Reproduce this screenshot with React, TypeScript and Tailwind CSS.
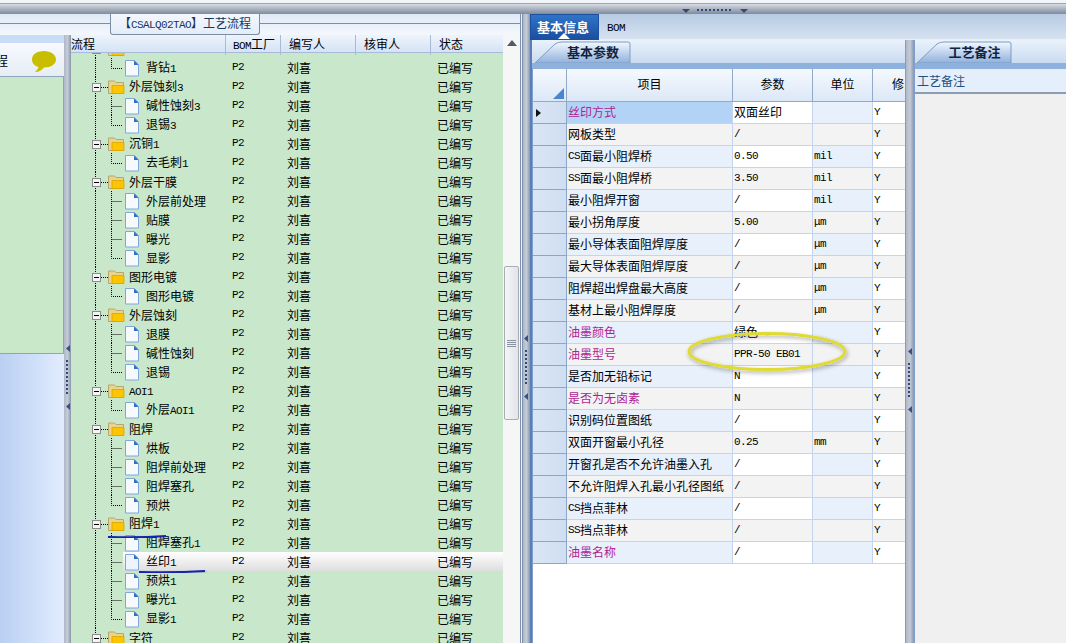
import React from "react";

const FONT = '"Noto Sans CJK SC", "Liberation Sans", sans-serif';

function T({ s }: { s: string }) {
  const parts = s.split(/([\x00-\x7fμ]+)/).filter(Boolean);
  return (
    <>
      {parts.map((p, i) =>
        /^[\x00-\x7fμ]+$/.test(p) ? (
          <span key={i} className="text-[11px] tracking-[-0.6px] whitespace-pre" style={{ fontFamily: '"Liberation Mono", monospace' }}>{p}</span>
        ) : (
          <span key={i}>{p}</span>
        )
      )}
    </>
  );
}

type Node = { l: string; k: "f" | "c" | "e"; blank?: boolean };

const tree: Node[] = [
  { l: "", k: "f", blank: true },
  { l: "背钻1", k: "e" },
  { l: "外层蚀刻3", k: "f" },
  { l: "碱性蚀刻3", k: "c" },
  { l: "退锡3", k: "e" },
  { l: "沉铜1", k: "f" },
  { l: "去毛刺1", k: "e" },
  { l: "外层干膜", k: "f" },
  { l: "外层前处理", k: "c" },
  { l: "贴膜", k: "c" },
  { l: "曝光", k: "c" },
  { l: "显影", k: "e" },
  { l: "图形电镀", k: "f" },
  { l: "图形电镀", k: "e" },
  { l: "外层蚀刻", k: "f" },
  { l: "退膜", k: "c" },
  { l: "碱性蚀刻", k: "c" },
  { l: "退锡", k: "e" },
  { l: "AOI1", k: "f" },
  { l: "外层AOI1", k: "e" },
  { l: "阻焊", k: "f" },
  { l: "烘板", k: "c" },
  { l: "阻焊前处理", k: "c" },
  { l: "阻焊塞孔", k: "c" },
  { l: "预烘", k: "e" },
  { l: "阻焊1", k: "f" },
  { l: "阻焊塞孔1", k: "c" },
  { l: "丝印1", k: "c" },
  { l: "预烘1", k: "c" },
  { l: "曝光1", k: "c" },
  { l: "显影1", k: "e" },
  { l: "字符", k: "f" },
];

function TreeGlyph({ n, sel }: { n: Node; sel: boolean }) {
  const folder = n.k === "f";
  return (
    <svg width={folder ? 54 : 69} height={19} className="shrink-0 block">
      <path d="M24.5 0V19" stroke="#000" strokeDasharray="1 1" />
      {folder ? (
        <>
          <path d="M30 10.5H37" stroke="#000" strokeDasharray="1 1" />
          <rect x="21.5" y="6.5" width="8" height="8" fill="#f4f4f4" stroke="#8c8c8c" />
          <path d="M23 10.5H28" stroke="#000" />
          <path d="M37.500 4h6l1.500 1.500h7.500v11H37.500z" fill="#e9d48c" stroke="#b9a66a" />
          <path d="M41 8.500h12v8H41z" fill="#fcc500" stroke="#d9a400" strokeWidth="0.8" />
        </>
      ) : (
        <>
          <path d={n.k === "e" ? "M40.5 0V10.5H51" : "M40.5 0V19M40.5 10.5H51"} stroke="#000" fill="none" strokeDasharray="1 1" />
          <path d="M54.5 2.5h9l4 4v11.5h-13z" fill={sel ? "#eef4fd" : "#f6faff"} stroke="#7fa8d8" />
          <path d="M63 2.5l4.5 4.5h-4.5z" fill="#2f6fc0" />
        </>
      )}
    </svg>
  );
}

function TreeRow({ n }: { n: Node }) {
  const sel = n.l === "丝印1";
  const cell = "h-[19px] flex items-center text-[12px] leading-[19px] text-black";
  return (
    <div className="h-[19px] relative grid grid-cols-[155px_55px_75px_75px_72px] w-[432px]">
      {sel && <div className="absolute left-[52px] right-0 top-0 h-[19px] bg-gradient-to-b from-white to-[#dedede]" />}
      <div className={`${cell} relative`}>
        <TreeGlyph n={n} sel={sel} />
        <span className={n.k === "f" ? "ml-[4px]" : "ml-[6px]"}><T s={n.l} /></span>
      </div>
      {n.blank ? null : (
        <>
          <div className={`${cell} relative pl-[6px]`}><T s="P2" /></div>
          <div className={`${cell} relative pl-[6px]`}>刘喜</div>
          <div className={`${cell} relative`}></div>
          <div className={`${cell} relative pl-[6px]`}>已编写</div>
        </>
      )}
    </div>
  );
}

const rows: [string, string, string, boolean][] = [
  ["丝印方式", "双面丝印", "", true],
  ["网板类型", "/", "", false],
  ["CS面最小阻焊桥", "0.50", "mil", false],
  ["SS面最小阻焊桥", "3.50", "mil", false],
  ["最小阻焊开窗", "/", "mil", false],
  ["最小拐角厚度", "5.00", "μm", false],
  ["最小导体表面阻焊厚度", "/", "μm", false],
  ["最大导体表面阻焊厚度", "/", "μm", false],
  ["阻焊超出焊盘最大高度", "/", "μm", false],
  ["基材上最小阻焊厚度", "/", "μm", false],
  ["油墨颜色", "绿色", "", true],
  ["油墨型号", "PPR-50 EB01", "", true],
  ["是否加无铅标记", "N", "", false],
  ["是否为无卤素", "N", "", true],
  ["识别码位置图纸", "/", "", false],
  ["双面开窗最小孔径", "0.25", "mm", false],
  ["开窗孔是否不允许油墨入孔", "/", "", false],
  ["不允许阻焊入孔最小孔径图纸", "/", "", false],
  ["CS挡点菲林", "/", "", false],
  ["SS挡点菲林", "/", "", false],
  ["油墨名称", "/", "", true],
];

function SlantTab({ label, w }: { label: string; w: number }) {
  return (
    <div className="relative h-[22px] flex items-center justify-center font-bold text-[13px] text-[#10233f]" style={{ width: w }}>
      <svg width={w} height={22} className="absolute inset-0">
        <defs>
          <linearGradient id={"t" + w} x1="0" y1="0" x2="0" y2="1">
            <stop offset="0" stopColor="#f2f7fd" />
            <stop offset="1" stopColor="#8fb1dd" />
          </linearGradient>
        </defs>
        <path d={`M0 22 L20 3 Q23 1 27 1 H${w - 3} Q${w - 1} 1 ${w - 1} 3 V22 Z`} fill={`url(#t${w})`} stroke="#7f9cc4" />
      </svg>
      <span className="relative pl-[20px]">{label}</span>
    </div>
  );
}

function VSplit({ w, cls }: { w: number; cls?: string }) {
  return <div className={`shrink-0 bg-gradient-to-r from-[#aeb8c6] via-[#c6ccd6] to-[#8997ab] ${cls || ""}`} style={{ width: w }} />;
}

function Dots({ x, y, n, v }: { x: number; y: number; n: number; v: boolean }) {
  return (
    <>
      {Array.from({ length: n }).map((_, i) => (
        <rect key={i} x={v ? x : x + i * 4} y={v ? y + i * 4 : y} width={2} height={2} fill="#2f4a80" />
      ))}
    </>
  );
}

export default function App() {
  return (
    <div className="relative w-[1066px] h-[643px] overflow-hidden flex flex-col bg-white text-[12px] text-black" style={{ fontFamily: FONT }}>
      {/* top strip */}
      <div className="h-[4px] bg-[#f1f4f9] border-b border-[#9aa6b8]" />
      <div className="h-[10px] bg-gradient-to-b from-[#d8dde4] via-[#a9b2bf] to-[#7f8b9b]" />

      <div className="flex-1 flex min-h-0">
        {/* LEFT */}
        <div className="w-[520px] shrink-0 flex flex-col bg-[#f2f6fc]">
          <div className="h-[21px] shrink-0 relative bg-gradient-to-b from-[#dfe9f6] to-[#f4f8fd]">
            <div className="absolute left-0 right-0 top-[9px] border-t border-[#7c8ca3]" />
            <div className="absolute left-[110px] top-0 w-[150px] h-[21px] bg-gradient-to-b from-[#f3f7fd] to-[#e4edf9] border border-t-0 border-[#7c8ca3] rounded-b-[3px] flex items-center justify-center text-[12px] text-[#16365c]">
              <span><T s="【CSALQ02TAO】" />工艺流程</span>
            </div>
          </div>
          <div className="flex-1 flex min-h-0">
            {/* far left sub panel */}
            <div className="w-[64px] shrink-0 flex flex-col bg-gradient-to-r from-[#b9d0f2] to-[#e2ecff]">
              <div className="h-[8px] bg-[#c9dcf7]" />
              <div className="h-[34px] bg-gradient-to-b from-[#f7f9fd] to-[#e6edf6] border-b border-[#8fa3bd] relative overflow-hidden flex items-center">
                <span className="text-[13px] ml-[-5px]">程</span>
                <svg width="26" height="23" className="absolute left-[31px] top-[7px]">
                  <path d="M13 1C6 1 1 4.500 1 9.500c0 4 3 6.500 6.500 7.500C7 19 5.500 20.500 4 22c4 0 7-2 9-4.500 7 0 12-3.500 12-8S20 1 13 1z" fill="#c9bd00" />
                </svg>
              </div>
              <div className="h-[277px] bg-[#c9e7c9] border-r border-b border-[#8fa3bd]" />
            </div>
            <VSplit w={7} />
            {/* tree grid */}
            <div className="w-[432px] shrink-0 flex flex-col bg-[#c9e8cb] overflow-hidden">
              <div className="h-[18px] shrink-0 grid grid-cols-[155px_55px_75px_75px_72px] bg-gradient-to-b from-[#eef4fc] to-[#d5e3f5] border-b border-[#a6bcd6] text-[12px] leading-[17px]">
                <div className="border-r border-[#a6bcd6]">流程</div>
                <div className="border-r border-[#a6bcd6] pl-[7px]"><T s="BOM" />工厂</div>
                <div className="border-r border-[#a6bcd6] pl-[8px]">编写人</div>
                <div className="border-r border-[#a6bcd6] pl-[8px]">核审人</div>
                <div className="pl-[8px]">状态</div>
              </div>
              <div className="flex-1 overflow-hidden">
                <div className="mt-[-14px]">
                  {tree.map((n, i) => <TreeRow key={i} n={n} />)}
                </div>
              </div>
            </div>
            {/* scrollbar */}
            <div className="flex-1 bg-[#f6f6f7] flex flex-col items-center pt-[5px]">
              <svg width="10" height="6" className="shrink-0"><path d="M0 6L5 0l5 6z" fill="#4d5b6d" /></svg>
              <div className="mt-[220px] w-[15px] h-[154px] rounded-[2px] border border-[#a9adb3] bg-gradient-to-r from-[#f5f5f7] to-[#e1e4ea] flex flex-col items-center justify-center gap-[1px]">
                <div className="w-[9px] h-[1px] bg-[#8a93a0]" />
                <div className="w-[9px] h-[1px] bg-[#8a93a0]" />
                <div className="w-[9px] h-[1px] bg-[#8a93a0]" />
                <div className="w-[9px] h-[1px] bg-[#8a93a0]" />
              </div>
            </div>
          </div>
        </div>
        <div className="w-[3px] shrink-0 bg-[#eef3fa] border-x border-[#7c90ad]" />
        <VSplit w={7} />
        <div className="w-[2px] shrink-0 bg-[#5a7fb8]" />

        {/* RIGHT */}
        <div className="flex-1 flex flex-col min-w-0">
          {/* top tabs */}
          <div className="h-[26px] shrink-0 flex bg-gradient-to-b from-[#b7cbe4] to-[#d6e2f0] border-b border-[#e8eef6]">
            <div className="ml-[-2px] w-[69px] h-[26px] relative bg-gradient-to-b from-[#2f74c8] to-[#1c4f9f] border border-[#1c4f9f] flex items-center justify-center pr-[3px] text-white font-bold text-[13px]">
              基本信息
              <svg width="12" height="6" className="absolute bottom-0 left-[27px]"><path d="M0 6L6 0l6 6z" fill="#fff" /></svg>
            </div>
            <div className="ml-[8px] leading-[24px] text-black"><T s="BOM" /></div>
          </div>
          <div className="flex-1 flex min-h-0">
            {/* param */}
            <div className="w-[373px] shrink-0 flex flex-col bg-white">
              <div className="h-[23px] shrink-0 flex items-end pl-[3px] bg-gradient-to-b from-[#eaf2fb] to-[#c9dbf1]">
                <SlantTab label="基本参数" w={96} />
              </div>
              <div className="h-[6px] shrink-0 bg-[#8fb1dd]" />
              <div className="grid grid-cols-[34px_166px_80px_60px_32px] border-l border-[#7e9fcd] w-[373px]">
                <div className="h-[33px] relative bg-gradient-to-b from-[#f5f9fe] to-[#dce8f7] border-r border-b border-[#92a9c8]">
                  <svg width="11" height="11" className="absolute right-[2px] bottom-[2px]"><path d="M11 0V11H0z" fill="#4a86d0" /></svg>
                </div>
                {["项目", "参数", "单位", "修"].map((h, i) => (
                  <div key={h} className={`h-[33px] pb-[2px] flex items-center justify-center bg-gradient-to-b from-[#f5f9fe] to-[#dce8f7] border-b border-[#92a9c8] ${i < 3 ? "border-r" : "justify-end pr-[1px]"}`}>{h}</div>
                ))}
                {rows.map(([a, b, c, m], i) => {
                  const even = i % 2 === 1;
                  const first = i === 0;
                  const line = "h-[22px] pb-[1px] border-b border-r border-[#c3d4ec] flex items-center pl-[1px] leading-[20px] overflow-hidden whitespace-nowrap";
                  return (
                    <React.Fragment key={i}>
                      <div className="h-[22px] relative border-b border-r border-[#8ea6c6] bg-gradient-to-r from-[#d9e6f6] to-[#cfdef1] flex items-center pl-[3px]">
                        {first && <svg width="5" height="8"><path d="M0 0l5 4-5 4z" fill="#111" /></svg>}
                      </div>
                      <div className={`${line} ${first ? "bg-[#b3d3f6]" : even ? "bg-[#f3f3f3]" : "bg-[#e7f0fb]"} ${m ? "text-[#b01e92]" : ""}`}><T s={a} /></div>
                      <div className={`${line} ${even ? "bg-[#f3f3f3]" : "bg-white"}`}><T s={b} /></div>
                      <div className={`${line} ${even ? "bg-[#f3f3f3]" : "bg-[#e7f0fb]"}`}><T s={c} /></div>
                      <div className={`h-[22px] border-b border-[#c3d4ec] flex items-center pl-[1px] ${even ? "bg-[#f3f3f3]" : "bg-white"}`}><T s="Y" /></div>
                    </React.Fragment>
                  );
                })}
              </div>
              <div className="flex-1 border-l border-[#7e9fcd]" />
            </div>
            <VSplit w={9} cls="border-l border-[#7e9fcd]" />
            {/* notes */}
            <div className="flex-1 flex flex-col border-l border-[#7e9fcd] bg-[#f0f0f0]">
              <div className="h-[23px] shrink-0 flex items-end pl-[2px] bg-gradient-to-b from-[#eaf2fb] to-[#c9dbf1]">
                <SlantTab label="工艺备注" w={95} />
              </div>
              <div className="h-[6px] shrink-0 bg-[#8fb1dd]" />
              <div className="h-[25px] shrink-0 bg-[#e5effb] border-b-2 border-[#8c9db3] pl-[2px] leading-[24px] text-[#1f4f7f]">工艺备注</div>
              <div className="flex-1" />
            </div>
          </div>
        </div>
      </div>

      {/* grips and hand-drawn marks over the screenshot */}
      <svg width="1066" height="643" className="absolute inset-0 pointer-events-none">
        <defs>
          <filter id="sh" x="-10%" y="-40%" width="120%" height="180%">
            <feDropShadow dx="1" dy="2" stdDeviation="2" floodColor="#000" floodOpacity="0.35" />
          </filter>
        </defs>
        <path d="M682 9h8l-4 4zM740 9h8l-4 4z" fill="#3a4a6a" />
        <Dots x={697} y={9} n={9} v={false} />
        <path d="M70 345v7l-4-3.500zM70 403v7l-4-3.500z" fill="#3a5080" />
        <Dots x={66} y={360} n={9} v={true} />
        <path d="M528 335v7l-4-3.500zM528 393v7l-4-3.500z" fill="#3a5080" />
        <Dots x={525} y={350} n={9} v={true} />
        <path d="M912 348v7l-4-3.500zM912 406v7l-4-3.500z" fill="#3a5080" />
        <Dots x={908} y={363} n={9} v={true} />
        <path d="M108 537Q140 538 166 536" stroke="#1420b0" strokeWidth="2" fill="none" filter="url(#sh)" />
        <path d="M139 572Q175 573 205 571" stroke="#1420b0" strokeWidth="2" fill="none" filter="url(#sh)" />
        <ellipse cx="767" cy="351.500" rx="78" ry="18" fill="none" stroke="#dfdb30" strokeWidth="3" filter="url(#sh)" />
      </svg>
    </div>
  );
}
